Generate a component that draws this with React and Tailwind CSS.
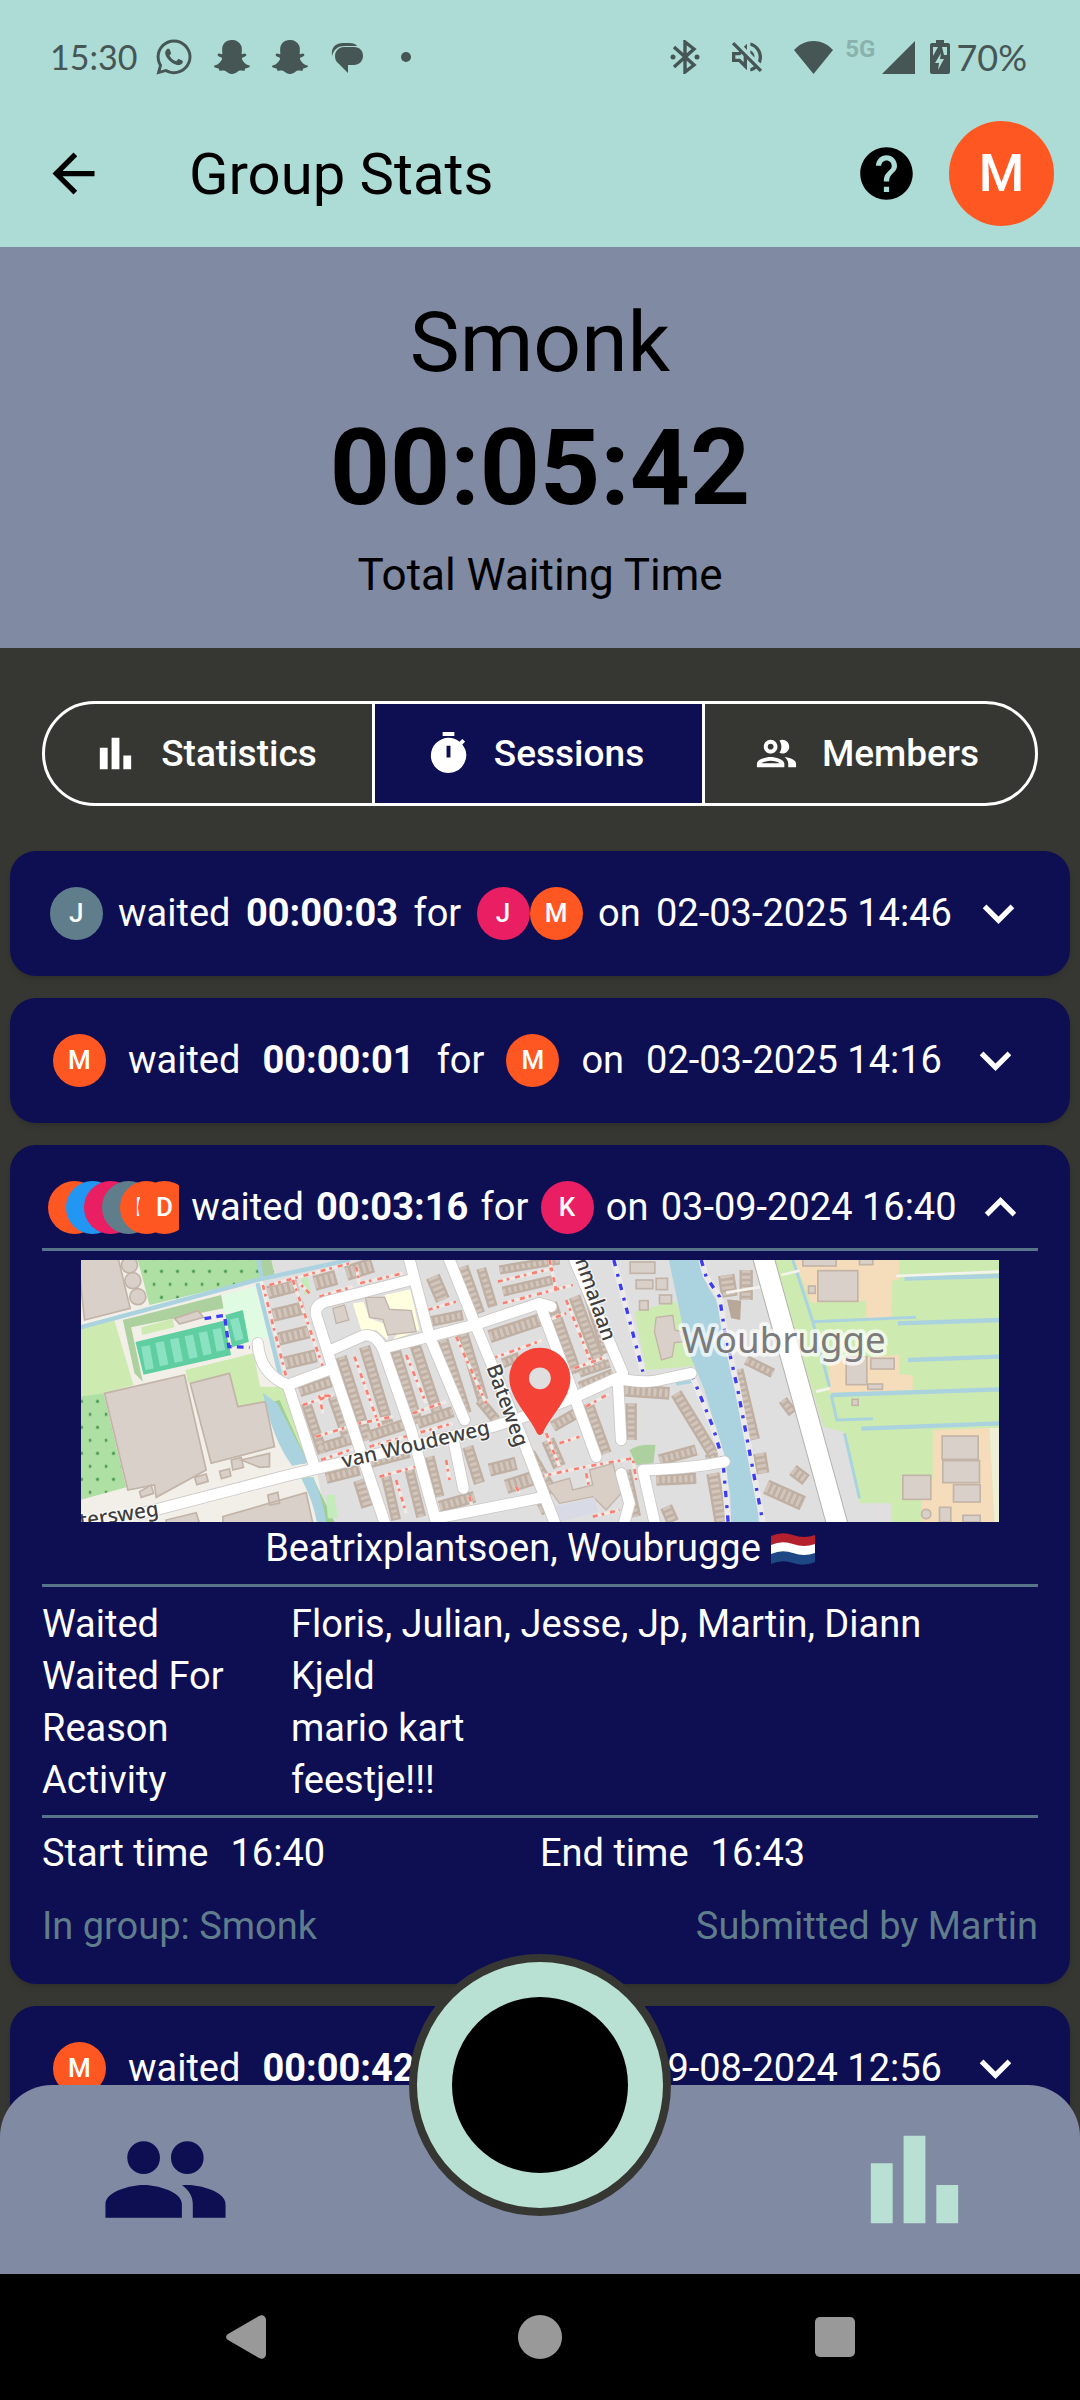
import { useState } from 'react';
import {
  MdArrowBack,
  MdExpandLess,
  MdExpandMore,
  MdHelp,
  MdOutlineVolumeOff,
  MdPeople,
  MdTimer,
} from 'react-icons/md';
import { FaSnapchatGhost, FaWhatsapp } from 'react-icons/fa';

const people = {
  floris: { letter: 'F', color: 'bg-[#ff5722]' },
  julian: { letter: 'J', color: 'bg-[#2196f3]' },
  jesse: { letter: 'J', color: 'bg-[#e91e63]' },
  jp: { letter: 'J', color: 'bg-[#607d8b]' },
  martin: { letter: 'M', color: 'bg-[#ff5722]' },
  diann: { letter: 'D', color: 'bg-[#ff5722]' },
  kjeld: { letter: 'K', color: 'bg-[#e91e63]' },
};

const sessions = [
  { id: 1, waited: ['jp'], time: '00:00:03', waitedFor: ['jesse', 'martin'], date: '02-03-2025 14:46' },
  { id: 2, waited: ['martin'], time: '00:00:01', waitedFor: ['martin'], date: '02-03-2025 14:16' },
  {
    id: 3,
    waited: ['floris', 'julian', 'jesse', 'jp', 'martin', 'diann'],
    time: '00:03:16',
    waitedFor: ['kjeld'],
    date: '03-09-2024 16:40',
    details: {
      place: 'Beatrixplantsoen, Woubrugge',
      rows: [
        ['Waited', 'Floris, Julian, Jesse, Jp, Martin, Diann'],
        ['Waited For', 'Kjeld'],
        ['Reason', 'mario kart'],
        ['Activity', 'feestje!!!'],
      ],
      start: '16:40',
      end: '16:43',
      group: 'Smonk',
      by: 'Martin',
    },
  },
  { id: 4, waited: ['martin'], time: '00:00:42', waitedFor: ['kjeld'], date: '29-08-2024 12:56' },
];

function BarChartIcon({ className }) {
  return (
    <svg viewBox="0 0 24 24" fill="currentColor" className={className} aria-hidden="true">
      <path d="M4 9h4v11H4zM10 4h4v16h-4zM16 13h4v7h-4z" />
    </svg>
  );
}

function GroupIcon({ className }) {
  return (
    <svg viewBox="0 0 24 24" fill="currentColor" className={className} aria-hidden="true">
      <path d="M9 13.75c-2.34 0-7 1.17-7 3.5V19h14v-1.75c0-2.33-4.66-3.5-7-3.5zM4.34 17c.84-.58 2.87-1.25 4.66-1.25s3.82.67 4.66 1.25H4.34zM9 12c1.93 0 3.5-1.57 3.5-3.5S10.93 5 9 5 5.5 6.57 5.5 8.5 7.07 12 9 12zm0-5c.83 0 1.5.67 1.5 1.5S9.83 10 9 10s-1.5-.67-1.5-1.5S8.17 7 9 7zm7.04 6.81c1.16.84 1.96 1.96 1.96 3.44V19h4v-1.75c0-2.02-3.5-3.17-5.96-3.44zM15 12c1.93 0 3.5-1.57 3.5-3.5S16.93 5 15 5c-.54 0-1.04.13-1.5.35.63.89 1 1.98 1 3.15s-.37 2.26-1 3.15c.46.22.96.35 1.5.35z" />
    </svg>
  );
}

function StatusBar() {
  return (
    <div className="flex h-[100px] items-center justify-between pt-[14px] pr-[53px] pl-[50px] text-[#455654]">
      <div className="flex items-center gap-[22px]">
        <span className="w-[84px] font-['Lato',sans-serif] text-[34px] leading-[40px] whitespace-nowrap">15:30</span>
        <FaWhatsapp className="h-[40px] w-[36px]" />
        <FaSnapchatGhost className="size-[36px]" />
        <FaSnapchatGhost className="size-[36px]" />
        <svg viewBox="0 0 36 36" className="size-[36px]" fill="currentColor" aria-hidden="true">
          <path d="M2 17C1 9 5 4 13 4h6c4 0 7 1 8 3H15C8 7 4 10 2 17z" />
          <path d="M14 8h10c6 0 9 4 9 9s-4 9-9 9h-6v8l-9-9c-3-2-4-5-4-8 0-5 4-9 9-9z" />
        </svg>
        <span className="flex w-[36px] justify-center">
          <span className="size-[10px] rounded-full bg-current" />
        </span>
      </div>
      <div className="flex items-center">
        <div className="flex items-center gap-[27px]">
          <svg viewBox="0 0 30 34" className="h-[34px] w-[30px]" aria-hidden="true">
            <path
              d="M4 7l20 18-9 7V2l9 7L4 27"
              fill="none"
              stroke="currentColor"
              strokeWidth="3.4"
            />
            <circle cx="3" cy="17" r="2.5" fill="currentColor" />
            <circle cx="27" cy="17" r="2.5" fill="currentColor" />
          </svg>
          <MdOutlineVolumeOff className="size-[40px]" />
          <svg viewBox="0 0 39 33" className="h-[33px] w-[39px]" fill="currentColor" aria-hidden="true">
            <path d="M0 9C11-3 28-3 39 9L19.500 33z" />
          </svg>
        </div>
        <span className="ml-[12px] self-start text-[24px] leading-[24px] font-bold text-[#8ab2ad]">5G</span>
        <svg viewBox="0 0 33 33" className="ml-[7px] size-[33px]" fill="currentColor" aria-hidden="true">
          <path d="M33 0v33H0z" />
        </svg>
        <svg viewBox="0 0 20 34" className="ml-[15px] h-[34px] w-[20px]" aria-hidden="true">
          <path d="M6 0h8v3h4a2 2 0 0 1 2 2v27a2 2 0 0 1-2 2H2a2 2 0 0 1-2-2V5a2 2 0 0 1 2-2h4z" fill="currentColor" />
          <path d="M3 7h5l-5 9zM12 7h5v8h-3zM11 13l-6 10h4l-1 7 6-11h-4z" fill="#addbd5" />
        </svg>
        <span className="ml-[6px] font-['Lato',sans-serif] text-[36px] leading-[40px]">70%</span>
      </div>
    </div>
  );
}

function AppBar() {
  return (
    <header className="bg-[#addbd5]">
      <StatusBar />
      <div className="flex h-[147px] items-center pr-[26px] pl-[42px]">
        <button type="button" aria-label="Back">
          <MdArrowBack className="size-[63px]" />
        </button>
        <h1 className="ml-[84px] flex-1 text-[58px] leading-[68px]">Group Stats</h1>
        <button type="button" aria-label="Help">
          <MdHelp className="size-[63px]" />
        </button>
        <button
          type="button"
          aria-label="Profile"
          className="ml-[31px] flex size-[105px] items-center justify-center rounded-full bg-[#ff5722] text-[52px] font-medium text-white"
        >
          M
        </button>
      </div>
    </header>
  );
}

function Summary() {
  return (
    <section className="flex flex-col items-center gap-[13px] bg-[#808aa3] pt-[46px] pb-[43px]">
      <h2 className="text-[84px] leading-[100px]">Smonk</h2>
      <p className="text-[105px] leading-[126px] font-bold">00:05:42</p>
      <p className="text-[44px] leading-[60px]">Total Waiting Time</p>
    </section>
  );
}

const tabs = [
  { name: 'Statistics', Icon: BarChartIcon },
  { name: 'Sessions', Icon: MdTimer },
  { name: 'Members', Icon: GroupIcon },
];

function Tabs() {
  const [active, setActive] = useState('Sessions');

  return (
    <div
      role="tablist"
      className="mx-[42px] mt-[53px] mb-[45px] grid h-[105px] grid-cols-3 divide-x-[3px] divide-white overflow-hidden rounded-full border-[3px] border-white"
    >
      {tabs.map(({ name, Icon }) => (
        <button
          key={name}
          type="button"
          role="tab"
          aria-selected={active === name}
          onClick={() => setActive(name)}
          className={`flex items-center justify-center gap-[22px] pr-[8px] text-[37px] font-medium text-white ${
            active === name ? 'bg-[#0e0e52]' : ''
          }`}
        >
          <Icon className="size-[47px]" />
          {name}
        </button>
      ))}
    </div>
  );
}

function Avatar({ id, className = '' }) {
  const { letter, color } = people[id];
  return (
    <span
      className={`flex size-[53px] shrink-0 items-center justify-center rounded-full text-[26px] font-medium ${color} ${className}`}
    >
      {letter}
    </span>
  );
}

// more than two people are stacked and cut off at a fixed width
function Avatars({ ids }) {
  if (ids.length > 2) {
    return (
      <span className="flex w-[131px] overflow-hidden">
        {ids.map((id, i) => (
          <Avatar key={id} id={id} className={i > 0 ? '-ml-[35px]' : ''} />
        ))}
      </span>
    );
  }
  return (
    <span className="flex">
      {ids.map((id) => (
        <Avatar key={id} id={id} />
      ))}
    </span>
  );
}

function Divider() {
  return <hr className="my-[9px] h-[3px] border-0 bg-[#57748a]" />;
}

// terraces of houses: x1, y1, x2, y2, width
const terraces = [
  [625, 158, 715, 135, 40], [640, 226, 735, 203, 40], [655, 298, 748, 275, 40], [675, 370, 770, 347, 40],
  [765, 130, 830, 112, 46], [860, 100, 940, 75, 46], [720, 455, 815, 425, 34], [740, 490, 790, 640, 32],
  [820, 470, 862, 590, 32], [845, 350, 925, 600, 34], [915, 320, 985, 550, 34], [1005, 325, 1075, 550, 34],
  [1065, 310, 1135, 520, 34], [1150, 300, 1220, 520, 34], [1210, 280, 1270, 480, 34], [1260, 480, 1310, 540, 30],
  [1110, 245, 1210, 225, 32], [1120, 110, 1150, 180, 44], [1210, 80, 1260, 220, 34], [1265, 85, 1300, 200, 30],
  [1320, 90, 1500, 60, 28], [1330, 155, 1480, 120, 30], [1290, 290, 1440, 240, 40], [780, 625, 900, 590, 34],
  [925, 590, 1030, 555, 34], [1075, 550, 1180, 515, 34], [800, 715, 900, 690, 34], [900, 720, 925, 800, 40],
  [935, 670, 1050, 640, 28], [980, 710, 1010, 840, 30], [1050, 690, 1085, 830, 30], [1110, 650, 1140, 770, 30],
  [1225, 620, 1260, 730, 34], [1140, 800, 1245, 770, 36], [1290, 690, 1370, 670, 40], [1340, 740, 1420, 715, 44],
  [1330, 370, 1380, 350, 30], [1410, 640, 1480, 760, 36], [1465, 600, 1500, 680, 40], [1440, 810, 1480, 790, 36],
  [1475, 190, 1550, 400, 36], [1545, 170, 1620, 370, 36], [1560, 80, 1640, 340, 30], [1560, 440, 1660, 400, 30],
  [1560, 400, 1650, 370, 26], [1480, 560, 1550, 520, 34], [1585, 490, 1640, 640, 34], [1715, 490, 1715, 600, 34],
  [1680, 450, 1830, 460, 38], [1850, 460, 1960, 640, 36], [1800, 660, 1910, 630, 34], [1790, 720, 1910, 715, 34],
  [1960, 700, 1985, 846, 40], [1940, 660, 1980, 650, 30], [1700, 690, 1730, 830, 30], [1820, 800, 1840, 846, 38],
  [2030, 390, 2080, 600, 44], [2100, 640, 2110, 700, 40], [2120, 740, 2230, 790, 46], [2200, 690, 2240, 720, 38],
  [2060, 360, 2140, 400, 30], [2170, 480, 2200, 520, 30], [2060, 90, 2060, 180, 40], [2000, 105, 2010, 170, 50],
];

const redPaths = [
  'M610 135L680 410M700 120L790 380M730 495L820 465L780 470L790 520M885 350L960 560M1040 345L1100 490',
  'M1190 290L1280 490M770 590L900 550L1000 530M1060 520L1160 485M785 660L900 620M930 620L1180 550',
  'M1105 210L1190 185M1330 190L1540 135M1315 125L1480 85M960 710L1070 680M1010 720L1040 820M1160 660L1170 720',
  'M1300 355L1450 300M1230 770L1240 810M1440 250L1520 220M1520 180L1600 380M1545 385L1640 350M1470 60L1490 150',
  'M1460 580L1500 680M1580 500L1650 460M1440 710L1580 680L1720 655L1730 720M1580 700L1595 770M1600 830L1680 810',
  'M630 135L870 70M890 80L900 130L1030 100M780 170L880 140M750 160L720 130M1500 610L1560 590M1370 740L1380 760',
];

const roads = [
  'M240 822L690 705L1300 560L1440 515L1550 470L1670 415Q1740 430 1790 422L1895 400',
  'M595 310Q600 400 685 435L820 385',
  'M685 435L765 680',
  'M1060 118L800 185Q765 195 770 225L820 385L975 846',
  'M815 330L900 292Q940 270 970 325L1245 255L1440 190L1475 200',
  'M1050 60L1110 290L1215 540',
  'M970 325L1055 570L1130 846',
  'M1170 60L1250 260L1390 600L1485 846',
  'M1180 590L1212 745',
  'M1130 835L1450 772',
  'M1440 190L1545 470L1610 650',
  'M1545 60L1690 400',
  'M1675 420L1685 600',
  'M1995 665Q1900 685 1750 690L1785 846',
  'M1685 700L1710 790L1695 846',
];

const sheds = [
  [2230, 50, 100, 28], [2400, 50, 40, 24], [2275, 92, 120, 92], [2247, 138, 20, 22], [2360, 350, 62, 84],
  [2434, 355, 70, 32], [2425, 432, 44, 16], [2378, 478, 18, 18], [2648, 588, 108, 70], [2650, 662, 110, 66],
  [2682, 734, 80, 52], [2530, 706, 84, 72], [2640, 802, 34, 44], [2710, 826, 52, 20], [1712, 66, 74, 34],
  [1730, 120, 50, 26], [1790, 115, 34, 34], [1800, 165, 36, 26], [1740, 182, 26, 28],
];

const quays = 'M1663 60L1750 395M1925 60L1940 110L1980 170L1995 270L2035 450L2110 846M1895 400L1960 560L1990 660L2006 846';

function Map() {
  return (
    <svg
      viewBox="63 60 2757 786"
      preserveAspectRatio="xMidYMid slice"
      className="block h-[262px] w-full bg-[#e0dfdf]"
      role="img"
      aria-label="Map of Woubrugge"
    >
      <defs>
        <pattern id="orchard" width="48" height="78" patternUnits="userSpaceOnUse" x="40" y="74">
          <rect width="48" height="78" fill="#aedfa3" />
          <circle cx="26" cy="20" r="5" fill="#4d9a55" />
          <circle cx="3" cy="59" r="5" fill="#4d9a55" />
        </pattern>
      </defs>
      <rect x="63" y="60" width="2757" height="786" fill="#e0dfdf" />

      {/* farms and greenhouses in the west */}
      <path d="M63 60H600L660 420L770 680L800 846H63z" fill="#f2efe9" />
      <path d="M63 262L165 242L222 435L135 460L63 472z" fill="#cdebb0" />
      <path d="M235 60H635L645 105L270 195z" fill="url(#orchard)" />
      <path d="M63 470L132 460L200 742L63 780z" fill="url(#orchard)" />
      <path d="M600 60H635L645 105L610 115zM190 240L485 165L492 205L215 262L250 425L225 400z" fill="#add19e" />
      <path d="M245 262L340 236L345 262L248 285zM378 390L582 340L602 440L672 440L745 665L720 670L615 485L535 500L510 402L385 428z" fill="#cdebb0" />
      <path d="M488 165L585 140L628 292L565 305L545 210L495 220z" fill="#dffce2" />
      <path d="M640 485L660 480L745 668L730 672zM740 712L760 712L825 846H795z" fill="#9fcf95" />
      <path d="M228 306L492 242L515 345L252 404zM498 225L550 210L568 305L518 322z" fill="#5fcea0" />
      <path d="M258 318L270 388M300 306L314 376M344 296L358 366M388 286L402 354M430 276L444 344M472 266L484 332M524 236L540 300" stroke="#8ae2c2" strokeWidth="26" fill="none" />
      <path d="M63 262L600 118L870 60M597 60L606 112M594 130L662 405" stroke="#aad3df" strokeWidth="13" fill="none" />
      <path d="M610 458L655 492L745 668L698 677Q640 600 610 458zM725 715L762 712Q790 780 800 846H772Q760 780 725 715z" fill="#aad3df" />
      <g fill="#d9d0c9" stroke="#c3b4a8" strokeWidth="5">
        <path d="M55 50H175L212 205L75 240z" />
        <circle cx="210" cy="75" r="24" />
        <circle cx="220" cy="122" r="24" />
        <circle cx="235" cy="170" r="24" />
        <path d="M135 460L375 405L440 690L290 772L285 735L205 750z" />
        <path d="M392 430L510 400L535 500L617 485L645 620L455 670z" />
        <path d="M345 235L415 212L432 232L360 252zM405 712L440 702L446 724L412 734zM480 694L510 686L514 708L486 716zM515 660L545 652L552 682L520 690zM545 660L630 640V680L600 682zM240 755L275 735L282 760L245 772z" />
        <path d="M320 840L410 818L420 850H320zM490 830L740 758L760 850H490zM625 765L655 757L660 790L630 795z" />
      </g>

      {/* school */}
      <path d="M880 190L912 185L930 235L985 255V300L950 270H905zM975 165L1052 148L1080 270L1000 300L1060 210L990 205z" fill="#ffffe0" />
      <path d="M918 172L975 172L990 208L1055 212L1070 275L985 285L970 238L930 232zM820 205L855 195L868 240L830 250z" fill="#d9d0c9" stroke="#c3b4a8" strokeWidth="4" />
      <path d="M725 115L745 110L755 160L735 165zM800 765H825L835 835H805z" fill="#c4ecbb" />

      {/* housing */}
      <g stroke="#bfb0a3" fill="none">
        {terraces.map(([x1, y1, x2, y2, w]) => (
          <path key={`${x1}-${y1}`} d={`M${x1} ${y1}L${x2} ${y2}`} strokeWidth={w} />
        ))}
      </g>
      <g stroke="#d2c6bc" strokeDasharray="9 8" fill="none">
        {terraces.map(([x1, y1, x2, y2, w]) => (
          <path key={`${x1}-${y1}`} d={`M${x1} ${y1}L${x2} ${y2}`} strokeWidth={w - 14} />
        ))}
      </g>
      <g stroke="#f0e9e6" strokeWidth="10" fill="none">
        {redPaths.map((d) => (
          <path key={d} d={d} />
        ))}
      </g>
      <g stroke="#f98072" strokeWidth="8" strokeDasharray="15 12 8 18" fill="none">
        {redPaths.map((d) => (
          <path key={d} d={d} />
        ))}
      </g>
      <path d="M1460 735L1530 715L1540 750L1600 735L1590 690L1660 670L1685 760L1640 810L1600 770L1500 790z" fill="#d9cfc6" stroke="#c3b4a8" strokeWidth="4" />
      <path d="M1485 800L1605 772L1615 815L1500 846z" fill="#d8dae6" />

      {/* church and river */}
      <path d="M1725 215L1850 183L1910 378L1760 390z" fill="#cdebb0" />
      <path d="M1790 232L1840 226L1846 270L1870 276V306L1845 308L1838 350L1806 360L1785 275z" fill="#d9d0c9" stroke="#c3b4a8" strokeWidth="4" />
      <path d="M1710 630Q1740 610 1788 615L1782 670L1730 675z" fill="#add19e" />
      <path d="M1828 60H1920L1945 140L1970 180L2035 470L2097 800V846H2015L2012 760L1985 620L1935 450L1885 330z" fill="#aad3df" />
      <path d="M1850 432L1900 424" stroke="#aad3df" strokeWidth="10" />
      <path d={quays} stroke="#eceaea" strokeWidth="18" fill="none" />
      <path d={quays} stroke="#3c3cf5" strokeWidth="10" strokeDasharray="19 24 9 22" fill="none" />
      <path d="M435 236L495 226L508 320L570 322" stroke="#3c3cf5" strokeWidth="10" strokeDasharray="20 16" fill="none" />

      {/* meadows in the east */}
      <path d="M2140 60H2820V846H2495V790H2400L2352 575L2292 560z" fill="#cdebb0" />
      <path d="M2205 60H2520V118L2498 122L2496 235H2420V182L2255 188zM2310 360L2520 345V402L2560 406V450L2310 460zM2620 570L2790 564L2805 846H2585V780L2620 715z" fill="#f5dcba" />
      <path d="M2790 564H2820V846H2805z" fill="#eef0d5" />
      <g stroke="#aad3df" strokeWidth="13" fill="none">
        <path d="M2535 116L2820 108M2515 250L2820 240M2545 360L2820 350M2315 465L2820 448M2405 566L2820 550" />
        <path d="M2200 60L2260 245L2570 232M2260 245L2310 440M2315 465L2332 540L2440 536M2355 580L2400 775" strokeWidth="9" />
      </g>
      <path d="M2000 158L2110 140M2165 105L2220 92M2270 455L2310 445M2510 108L2820 95" stroke="#f5f3ee" strokeWidth="8" fill="none" />
      <g fill="#d9d0c9" stroke="#c3b4a8" strokeWidth="5">
        {sheds.map(([x, y, width, height]) => (
          <rect key={`${x}-${y}`} x={x} y={y} width={width} height={height} />
        ))}
        <circle cx="2600" cy="822" r="14" />
      </g>
      <path d="M2002 178L2045 182L2042 240L2015 235z" fill="#b8a89a" />

      {/* streets */}
      <g fill="none" strokeLinecap="round" strokeLinejoin="round">
        <g stroke="#cbc7c4" strokeWidth="37">
          {roads.map((d) => (
            <path key={d} d={d} />
          ))}
        </g>
        <path d="M2108 40L2200 370L2338 870" stroke="#b5b1ae" strokeWidth="66" />
        <g stroke="#fff" strokeWidth="32">
          {roads.map((d) => (
            <path key={d} d={d} />
          ))}
        </g>
        <path d="M2108 40L2200 370L2338 870" stroke="#fff" strokeWidth="60" />
      </g>

      <g
        fontFamily="'Noto Sans', sans-serif"
        fontWeight="500"
        stroke="#fff"
        strokeOpacity="0.7"
        strokeWidth="8"
        strokeLinejoin="round"
        style={{ paintOrder: 'stroke' }}
        fill="#3f3f3f"
        fontSize="62"
      >
        <text transform="translate(852 684) rotate(-13)">van Woudeweg</text>
        <text transform="translate(1280 382) rotate(70)">Bateweg</text>
        <text transform="translate(1540 42) rotate(71)">mmalaan</text>
        <text transform="translate(63 864) rotate(-9)">tersweg</text>
        <text x="1866" y="338" fontSize="110" fontWeight="400" fill="#7b7b7b" strokeWidth="22">
          Woubrugge
        </text>
      </g>
      <path
        transform="translate(1284 297) scale(13.1)"
        fill="#f44336"
        d="M12 2C8.130 2 5 5.130 5 9c0 4.600 4.500 8.500 6.200 12.300.300.900 1.300.900 1.600 0C14.500 17.500 19 13.600 19 9c0-3.870-3.130-7-7-7zm0 9.500a2.500 2.500 0 1 1 0-5 2.500 2.500 0 0 1 0 5z"
      />
    </svg>
  );
}

function DutchFlag() {
  return (
    <svg viewBox="0 0 44 32" className="h-[32px] w-[44px]" role="img" aria-label="Netherlands">
      <path d="M0 3Q11-2 22 2T44 2V12Q33 15 22 12T0 13z" fill="#b5202f" />
      <path d="M0 12Q11 7 22 11T44 11V22Q33 25 22 21T0 22z" fill="#fff" />
      <path d="M0 21Q11 16 22 20T44 20V29Q33 34 22 30T0 31z" fill="#1e4785" />
    </svg>
  );
}

function SessionDetails({ details }) {
  return (
    <div className="mx-[32px] text-[38px] leading-[53px]">
      <Divider />
      <div className="px-[39px]">
        <Map />
        <p className="flex items-center justify-center gap-[10px]">
          {details.place} <DutchFlag />
        </p>
      </div>
      <Divider />
      <dl className="pt-[2px] leading-[52px]">
        {details.rows.map(([label, value]) => (
          <div key={label} className="grid grid-cols-4">
            <dt>{label}</dt>
            <dd className="col-span-3">{value}</dd>
          </div>
        ))}
      </dl>
      <Divider />
      <div className="grid grid-cols-2">
        <p className="flex gap-[22px]">
          <span>Start time</span>
          <span>{details.start}</span>
        </p>
        <p className="flex gap-[22px]">
          <span>End time</span>
          <span>{details.end}</span>
        </p>
      </div>
      <div className="mt-5 flex justify-between text-[#607d8b]">
        <p>In group: {details.group}</p>
        <p>Submitted by {details.by}</p>
      </div>
    </div>
  );
}

function SessionCard({ session, open, onToggle }) {
  const Chevron = open ? MdExpandLess : MdExpandMore;

  return (
    <li className="rounded-[26px] bg-[#0e0e52] py-[31px] text-white shadow-md">
      <button
        type="button"
        aria-expanded={open}
        onClick={onToggle}
        className="flex w-full items-center justify-around px-[32px] text-[38px] leading-[53px] whitespace-nowrap"
      >
        <Avatars ids={session.waited} />
        <span>waited</span>
        <span className="font-bold">{session.time}</span>
        <span>for</span>
        <Avatars ids={session.waitedFor} />
        <span>on</span>
        <span>{session.date}</span>
        <Chevron className="size-[63px] shrink-0" />
      </button>
      {open && session.details && <SessionDetails details={session.details} />}
    </li>
  );
}

function BottomNav() {
  return (
    <footer className="fixed inset-x-0 bottom-0">
      <nav className="relative flex h-[189px] items-center justify-between rounded-t-[52px] bg-[#808aa3] px-[100px]">
        <a href="#groups" aria-label="Groups" className="text-[#0e0e52]">
          <MdPeople className="size-[131px]" />
        </a>
        <button
          type="button"
          aria-label="Start waiting"
          className="absolute inset-x-0 -top-[131px] mx-auto size-[262px] rounded-full border-8 border-[#363732] bg-[#b8e1d3] p-[35px]"
        >
          <span className="block size-full rounded-full bg-black" />
        </button>
        <a href="#stats" aria-label="Stats" className="text-[#b8e1d3]">
          <BarChartIcon className="size-[131px]" />
        </a>
      </nav>
      <div className="flex h-[126px] items-center justify-between bg-black px-[214px] text-[#999]">
        <button type="button" aria-label="System back" className="flex size-[63px] items-center justify-center">
          <svg viewBox="0 0 40 44" className="h-[44px] w-[40px]" fill="currentColor" aria-hidden="true">
            <path d="M33 1c3-2 7 0 7 4v34c0 4-4 6-7 4L2 25c-2.500-1.500-2.500-4.500 0-6z" />
          </svg>
        </button>
        <button type="button" aria-label="Home" className="flex size-[63px] items-center justify-center">
          <span className="size-[44px] rounded-full bg-current" />
        </button>
        <button type="button" aria-label="Recent apps" className="flex size-[63px] items-center justify-center">
          <span className="size-[40px] rounded-[5px] bg-current" />
        </button>
      </div>
    </footer>
  );
}

export default function App() {
  const [openId, setOpenId] = useState(3);

  return (
    <div className="min-h-screen bg-[#363732] pb-[260px] font-['Roboto',sans-serif] text-black">
      <AppBar />
      <main>
        <Summary />
        <Tabs />
        <ul className="mx-[10px] flex flex-col gap-[22px]">
          {sessions.map((session) => (
            <SessionCard
              key={session.id}
              session={session}
              open={openId === session.id}
              onToggle={() => setOpenId(openId === session.id ? null : session.id)}
            />
          ))}
        </ul>
      </main>
      <BottomNav />
    </div>
  );
}
